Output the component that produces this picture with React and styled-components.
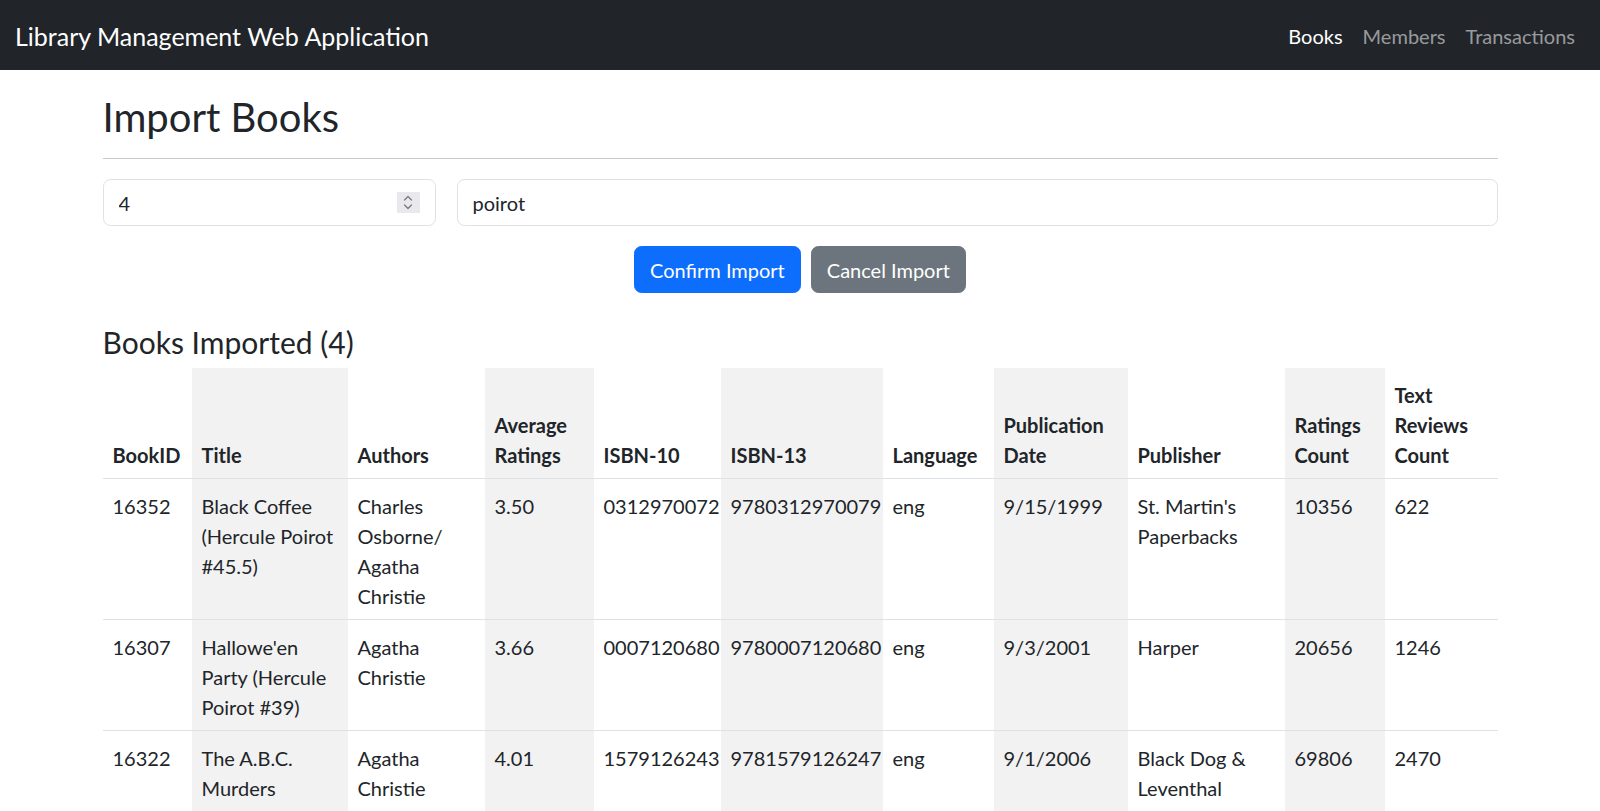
import React from 'react';
import styled, { createGlobalStyle } from 'styled-components';

const GlobalStyle = createGlobalStyle`
  * {
    box-sizing: border-box;
  }

  body {
    margin: 0;
    font-family: Lato, "Liberation Sans", sans-serif;
    font-size: 20px;
    line-height: 1.5;
    color: #212529;
    background: #fff;
  }
`;

const Navbar = styled.nav`
  height: 70px;
  padding: 10px 15px;
  background: #212529;
  display: flex;
  align-items: center;
  justify-content: space-between;
`;

const Brand = styled.a`
  font-size: 25px;
  line-height: 37.5px;
  padding: 7.5px 0 5px;
  color: #fff;
  text-decoration: none;
`;

const NavList = styled.ul`
  display: flex;
  list-style: none;
  margin: 0;
  padding: 0;
`;

const NavLink = styled.a`
  display: block;
  padding: 11px 10px 9px;
  line-height: 30px;
  color: ${({ $active }) => ($active ? '#fff' : 'rgba(255, 255, 255, 0.55)')};
  text-decoration: none;
`;

const Main = styled.main`
  width: 1395px;
  margin: 0 auto;
  padding-top: 23px;
`;

const PageTitle = styled.h2`
  margin: 0 0 17px;
  font-size: 40px;
  font-weight: 400;
  line-height: 48px;
`;

const Divider = styled.hr`
  margin: 0 0 20px;
  border: 0;
  border-top: 1px solid rgba(33, 37, 41, 0.25);
`;

const InputRow = styled.div`
  display: grid;
  grid-template-columns: 333px 1fr;
  gap: 21px;
`;

const fieldBox = `
  height: 47px;
  border: 1px solid #dee2e6;
  border-radius: 7.5px;
  background: #fff;
  font-family: inherit;
  font-size: 20px;
  line-height: 30px;
  color: #212529;
`;

const NumberField = styled.div`
  ${fieldBox}
  display: flex;
  align-items: center;
  padding: 0 15px 0 15px;
`;

const BareInput = styled.input`
  flex: 1;
  min-width: 0;
  border: 0;
  padding: 0;
  outline: none;
  font: inherit;
  color: inherit;
  background: transparent;
`;

const Spinner = styled.span`
  width: 23px;
  height: 21px;
  background: #e9e9ed;
  display: flex;
  align-items: center;
  justify-content: center;
`;

const TextField = styled.input`
  ${fieldBox}
  width: 100%;
  padding: 7.5px 15px;
  outline: none;
`;

const ButtonRow = styled.div`
  display: flex;
  justify-content: center;
  gap: 10px;
  margin-top: 20px;
`;

const Button = styled.button`
  height: 47px;
  padding: 7.5px 15px;
  border: 1px solid ${({ $variant }) => ($variant === 'primary' ? '#0d6efd' : '#6c757d')};
  border-radius: 7.5px;
  background: ${({ $variant }) => ($variant === 'primary' ? '#0d6efd' : '#6c757d')};
  color: #fff;
  font-family: inherit;
  font-size: 20px;
  line-height: 30px;
  cursor: pointer;
`;

const SectionTitle = styled.h4`
  margin: 31px 0 8px;
  font-size: 30px;
  font-weight: 400;
  line-height: 36px;
`;

const Table = styled.table`
  width: 100%;
  table-layout: fixed;
  border-collapse: collapse;

  th,
  td {
    padding: 12px 10px 8px;
    border-bottom: 1px solid #dee2e6;
    text-align: left;
    vertical-align: top;
    line-height: 30px;
  }

  th {
    font-weight: 700;
    vertical-align: bottom;
  }

  tr > :nth-child(even) {
    background: #f2f2f2;
  }
`;

const columns = [
  ['BookID', 89],
  ['Title', 156],
  ['Authors', 137],
  ['Average Ratings', 109],
  ['ISBN-10', 127],
  ['ISBN-13', 162],
  ['Language', 111],
  ['Publication Date', 134],
  ['Publisher', 157],
  ['Ratings Count', 100],
  ['Text Reviews Count', 113],
];

const books = [
  ['16352', 'Black Coffee (Hercule Poirot #45.5)', 'Charles Osborne/\u200BAgatha Christie', '3.50', '0312970072', '9780312970079', 'eng', '9/15/1999', "St. Martin's Paperbacks", '10356', '622'],
  ['16307', "Hallowe'en Party (Hercule Poirot #39)", 'Agatha Christie', '3.66', '0007120680', '9780007120680', 'eng', '9/3/2001', 'Harper', '20656', '1246'],
  ['16322', 'The A.B.C. Murders', 'Agatha Christie', '4.01', '1579126243', '9781579126247', 'eng', '9/1/2006', 'Black Dog & Leventhal', '69806', '2470'],
  ['16330', 'Five Little Pigs (Hercule Poirot #25)', 'Agatha Christie', '3.94', '0007120699', '9780007120697', 'eng', '4/7/2003', 'HarperCollins', '31204', '1586'],
];

function SpinIcon() {
  return (
    <svg width="10" height="17" viewBox="0 0 10 17" fill="none" stroke="#76767c" strokeWidth="1.2" strokeLinecap="round" strokeLinejoin="round">
      <path d="M1.5 6 L5 2.5 L8.5 6" />
      <path d="M1.5 11 L5 14.5 L8.5 11" />
    </svg>
  );
}

export default function App() {
  return (
    <>
      <GlobalStyle />
      <Navbar>
        <Brand href="#">Library Management Web Application</Brand>
        <NavList>
          <li><NavLink href="#" $active>Books</NavLink></li>
          <li><NavLink href="#">Members</NavLink></li>
          <li><NavLink href="#">Transactions</NavLink></li>
        </NavList>
      </Navbar>
      <Main>
        <PageTitle>Import Books</PageTitle>
        <Divider />
        <InputRow>
          <NumberField>
            <BareInput type="text" defaultValue="4" />
            <Spinner><SpinIcon /></Spinner>
          </NumberField>
          <TextField type="text" defaultValue="poirot" />
        </InputRow>
        <ButtonRow>
          <Button $variant="primary">Confirm Import</Button>
          <Button $variant="secondary">Cancel Import</Button>
        </ButtonRow>
        <SectionTitle>Books Imported ({books.length})</SectionTitle>
        <Table>
          <colgroup>
            {columns.map(([name, width]) => (
              <col key={name} style={{ width }} />
            ))}
          </colgroup>
          <thead>
            <tr>
              {columns.map(([name]) => (
                <th key={name}>{name}</th>
              ))}
            </tr>
          </thead>
          <tbody>
            {books.map((row) => (
              <tr key={row[0]}>
                {row.map((cell, i) => (
                  <td key={i}>{cell}</td>
                ))}
              </tr>
            ))}
          </tbody>
        </Table>
      </Main>
    </>
  );
}
